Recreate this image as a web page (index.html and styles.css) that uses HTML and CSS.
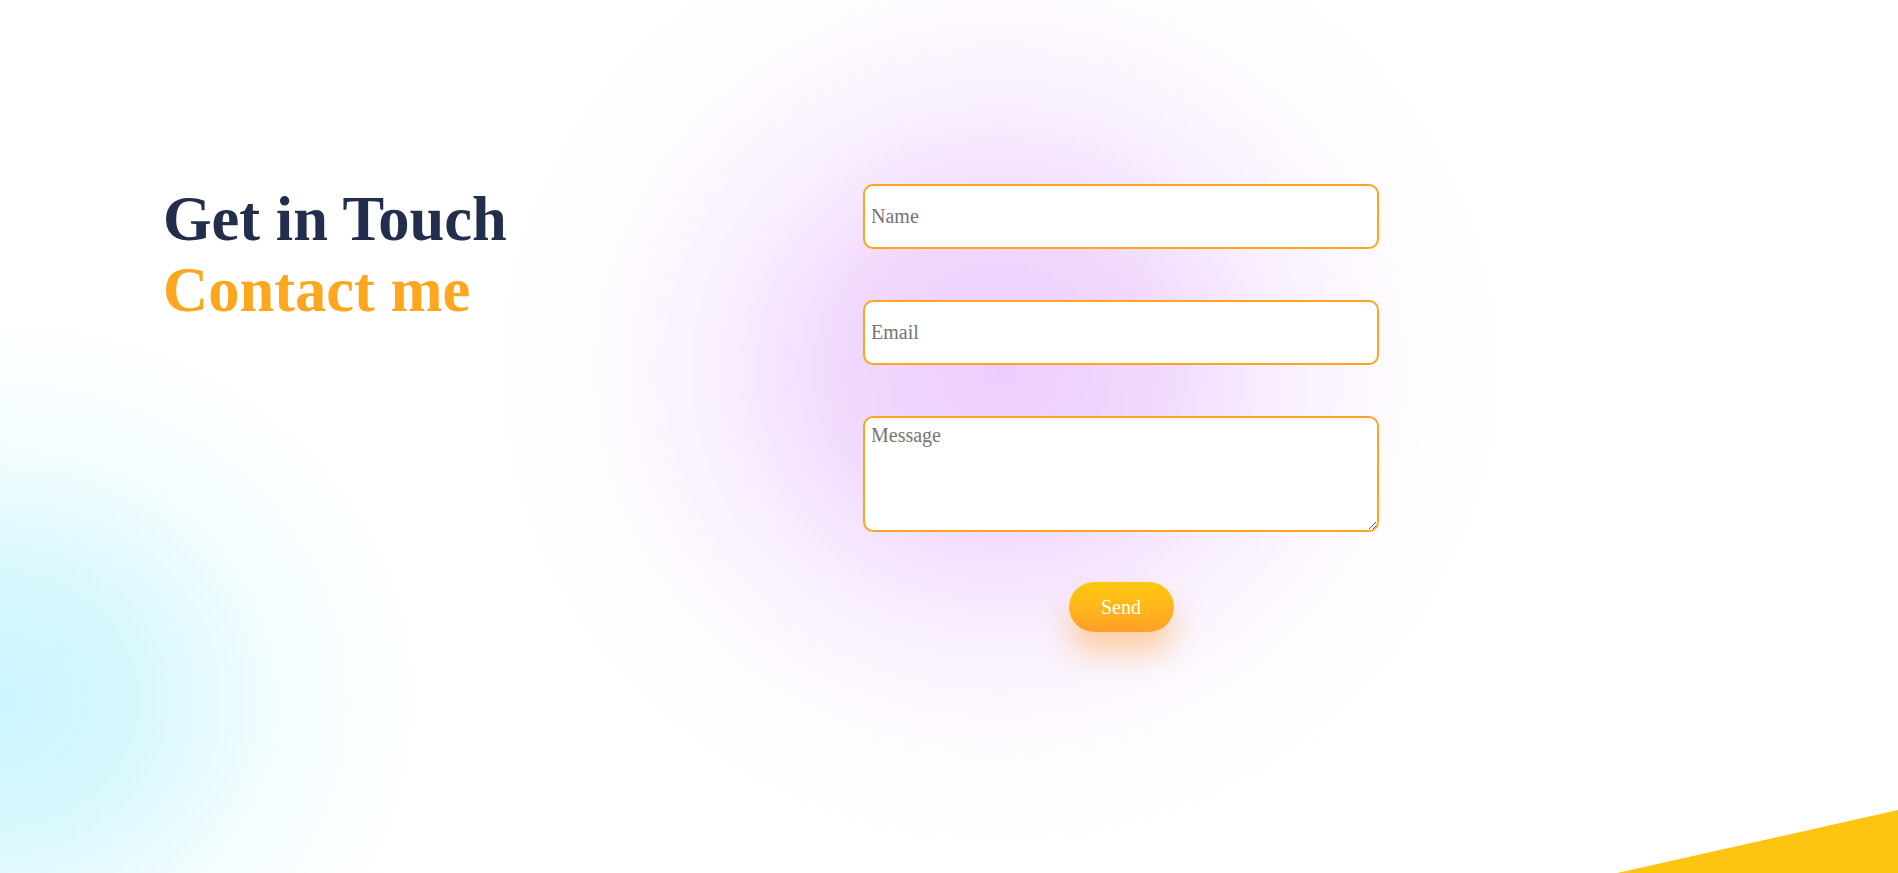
FILE: index.html
```html
<!DOCTYPE html>
<html lang="en">
<head>
<meta charset="utf-8">
<title>Contact</title>
<link rel="stylesheet" href="styles.css">
</head>
<body>
<main class="contact">
  <div class="intro">
    <h1 class="title"><span class="title-dark">Get in Touch</span><span class="title-accent">Contact me</span></h1>
  </div>
  <form class="form">
    <input class="field" type="text" placeholder="Name">
    <input class="field" type="email" placeholder="Email">
    <textarea class="field area" placeholder="Message"></textarea>
    <button class="send" type="button">Send</button>
  </form>
</main>
<div class="corner"></div>
</body>
</html>
```

FILE: styles.css
```css
html, body {
  margin: 0;
  padding: 0;
}
body {
  width: 1898px;
  height: 873px;
  overflow: hidden;
  position: relative;
  font-family: "Liberation Serif", "Times New Roman", serif;
  background-color: #ffffff;
  background-image:
    radial-gradient(ellipse 510px 480px at 1000px 370px, rgba(236, 206, 252, 1) 0%, rgba(239, 212, 253, 0.9) 30%, rgba(245, 228, 254, 0.6) 55%, rgba(250, 242, 254, 0.3) 78%, rgba(255, 255, 255, 0) 100%),
    radial-gradient(ellipse 430px 390px at 0px 700px, rgba(203, 245, 254, 1) 0%, rgba(212, 247, 254, 0.85) 35%, rgba(232, 251, 254, 0.5) 65%, rgba(255, 255, 255, 0) 100%);
}
.contact {
  display: flex;
  align-items: flex-start;
  padding: 184px 0 0 163px;
}
.intro {
  width: 700px;
  flex: none;
}
.title {
  margin: 0;
  font-size: 62.5px;
  line-height: 71px;
  font-weight: bold;
  padding-top: 0;
}
.title-dark {
  display: block;
  color: #232d4c;
}
.title-accent {
  display: block;
  color: #ffa61f;
}
.form {
  width: 516px;
  display: flex;
  flex-direction: column;
  align-items: center;
  gap: 51px;
}
.field {
  box-sizing: border-box;
  width: 516px;
  height: 65px;
  border: 2px solid #ffa41f;
  border-radius: 10px;
  background: #ffffff;
  font-family: "Liberation Serif", "Times New Roman", serif;
  font-size: 20px;
  color: #222;
  padding: 0 6px;
  margin: 0;
  outline: none;
}
.field::placeholder {
  color: #757575;
}
.area {
  height: 116px;
  padding: 6px 6px;
  resize: vertical;
  display: block;
}
.send {
  width: 105px;
  height: 50px;
  border: none;
  border-radius: 25px;
  background: linear-gradient(180deg, #fec80e 0%, #ffb71a 50%, #ff9f2b 100%);
  color: #ffffff;
  font-family: "Liberation Serif", "Times New Roman", serif;
  font-size: 20px;
  box-shadow: 0 20px 30px rgba(255, 165, 50, 0.45);
  cursor: pointer;
  margin-top: -1px;
}
.corner {
  position: absolute;
  right: 0;
  bottom: 0;
  width: 281px;
  height: 63px;
  background: #fdc512;
  clip-path: polygon(0 100%, 100% 0, 100% 100%);
}
```
